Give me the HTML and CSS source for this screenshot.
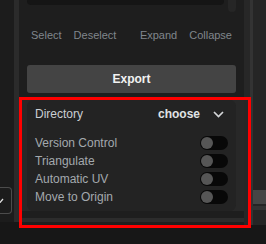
FILE: index.html
```html
<!DOCTYPE html>
<html lang="en">
<head>
    <meta charset="UTF-8">
    <title>Export panel</title>
    <link rel="stylesheet" href="styles.css">
</head>
<body>
    <div class="screen">
        <div class="side-left">
            <div class="peek">
                <svg width="6" height="6" viewBox="0 0 6 6"><polyline points="-2,4 0,5.5 3,2" fill="none" stroke="#e0e0e0" stroke-width="1.3"/></svg>
            </div>
        </div>
        <div class="rail"></div>

        <div class="panel">
            <div class="stub">
                <div class="list-end"></div>
                <div class="scroll-end"></div>
            </div>

            <div class="tools">
                <div class="group">
                    <span class="tool">Select</span>
                    <span class="tool">Deselect</span>
                </div>
                <div class="group">
                    <span class="tool">Expand</span>
                    <span class="tool">Collapse</span>
                </div>
            </div>

            <div class="export">Export</div>

            <div class="section">
                <div class="card">
                    <div class="dir-row">
                        <span class="dir-label">Directory</span>
                        <span class="choose">choose</span>
                        <svg class="chevron" width="20" height="14" viewBox="0 0 20 14">
                            <polyline points="6,5 10.5,9.5 15,5" fill="none" stroke="#d4d6d8" stroke-width="1.7"/>
                        </svg>
                    </div>
                    <div class="options">
                        <div class="opt"><span>Version Control</span><i class="toggle"></i></div>
                        <div class="opt"><span>Triangulate</span><i class="toggle"></i></div>
                        <div class="opt"><span>Automatic UV</span><i class="toggle"></i></div>
                        <div class="opt"><span>Move to Origin</span><i class="toggle"></i></div>
                    </div>
                </div>
            </div>
            <div class="under"></div>
            <div class="hbar"></div>
        </div>

        <div class="rail-r"></div>
        <div class="rail-r2"></div>
        <div class="side-right">
            <div class="band"></div>
            <div class="band thin"></div>
        </div>
    </div>

    <!-- annotation frame -->
    <div class="highlight"></div>
</body>
</html>
```

FILE: styles.css
```css
*{
    margin: 0;
    padding: 0;
    box-sizing: border-box;
}
body{
    background-color: #171717;
    font-family: "Liberation Sans", Arial, sans-serif;
    overflow: hidden;
    width: 266px;
    height: 244px;
    position: relative;
}
.screen{
    display: flex;
    height: 225px;
}
.side-left{
    width: 14px;
    background: #1c1c1c;
    padding-top: 187px;
    height: 222px;
}
.peek{
    width: 12px;
    height: 27px;
    border: 1px solid #4c4c4c;
    border-left: none;
    border-radius: 0 4px 4px 0;
    padding-top: 9px;
}
.peek svg{
    display: block;
}
.rail{
    width: 5px;
    height: 222px;
    background: #2b2b2b;
}
.panel{
    width: 225px;
    background: #1e1e1e;
    padding: 0 8px;
    display: flex;
    flex-direction: column;
}
.stub{
    display: flex;
    gap: 4px;
    height: 12px;
}
.list-end{
    flex: 1;
    height: 5px;
    background: #151515;
    border-radius: 0 0 4px 4px;
}
.scroll-end{
    width: 8px;
    height: 12px;
    background: #262626;
    border-radius: 0 0 4px 4px;
}
.tools{
    margin-top: 13px;
    height: 20px;
    display: flex;
    justify-content: space-between;
}
.group{
    display: flex;
    gap: 4px;
}
.tool{
    font-size: 11px;
    line-height: 20px;
    color: #80868c;
    padding: 0 4px;
}
.export{
    margin-top: 20px;
    height: 28px;
    background: #444444;
    border-radius: 3px;
    color: #f2f2f2;
    font-size: 12px;
    font-weight: bold;
    line-height: 28px;
    text-align: center;
}
.section{
    margin: 4px -8px 0;
    padding: 3px 8px 0;
    background: #282828;
}
.card{
    background: #232323;
    border-radius: 6px;
    padding: 7px 8px 5px;
}
.dir-row{
    display: flex;
    align-items: center;
    height: 14px;
    font-size: 12px;
    line-height: 14px;
}
.dir-label{
    flex: 1;
    color: #cbcfd3;
}
.choose{
    color: #e0e3e6;
    font-weight: bold;
    margin-right: 8px;
}
.chevron{
    display: block;
}
.options{
    margin-top: 13px;
}
.opt{
    display: flex;
    align-items: center;
    justify-content: space-between;
    height: 18px;
    font-size: 12px;
    line-height: 18px;
    color: #a4a9ae;
}
.toggle{
    display: block;
    width: 28px;
    height: 14px;
    border-radius: 7px;
    background: #080808;
    padding: 1px;
}
.toggle::before{
    content: "";
    display: block;
    width: 12px;
    height: 12px;
    border-radius: 50%;
    background: #565656;
}
.under{
    height: 7px;
}
.hbar{
    height: 4px;
    margin: 0 -8px;
    background: #2c2c2c;
}
.rail-r{
    width: 6px;
    background: #272727;
}
.rail-r2{
    width: 3px;
    background: #333333;
}
.side-right{
    flex: 1;
    background: #252525;
    padding-top: 190px;
}
.band{
    height: 14px;
    background: #454545;
}
.band.thin{
    height: 4px;
    margin-top: 2px;
    background: #333333;
}
/* red frame drawn over the section */
.highlight{
    position: absolute;
    left: 19px;
    top: 97px;
    width: 232px;
    height: 131px;
    border: 3px solid #ff0000;
}
```
